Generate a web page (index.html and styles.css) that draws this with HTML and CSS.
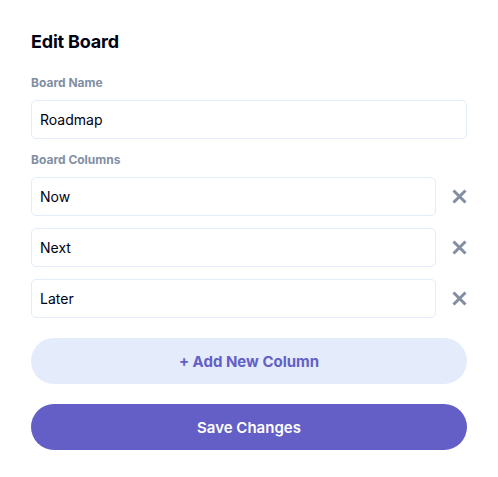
FILE: index.html
```html
<!DOCTYPE html>
<html>
<head>
<meta charset="utf-8">
<link rel="stylesheet" href="styles.css">
</head>
<body>
<div class="modal">
  <h1 class="title">Edit Board</h1>
  <div class="field">
    <div class="label">Board Name</div>
    <div class="input">Roadmap</div>
  </div>
  <div class="field">
    <div class="label">Board Columns</div>
    <div class="cols">
      <div class="col-row"><div class="input">Now</div><span class="x"><svg width="15" height="15" viewBox="0 0 15 15"><g stroke="#828FA3" stroke-width="3"><path d="M1.5 1.5l12 12M13.5 1.5l-12 12"/></g></svg></span></div>
      <div class="col-row"><div class="input">Next</div><span class="x"><svg width="15" height="15" viewBox="0 0 15 15"><g stroke="#828FA3" stroke-width="3"><path d="M1.5 1.5l12 12M13.5 1.5l-12 12"/></g></svg></span></div>
      <div class="col-row"><div class="input">Later</div><span class="x"><svg width="15" height="15" viewBox="0 0 15 15"><g stroke="#828FA3" stroke-width="3"><path d="M1.5 1.5l12 12M13.5 1.5l-12 12"/></g></svg></span></div>
    </div>
  </div>
  <div class="btn btn-secondary">+ Add New Column</div>
  <div class="btn btn-primary">Save Changes</div>
</div>
</body>
</html>
```
FILE: styles.css
```css
* { box-sizing: border-box; }
html, body { margin: 0; background: #fff; }
body { font-family: Inter, "Open Sans", sans-serif; }
.modal { padding: 30px 31px 20px 31px; display: flex; flex-direction: column; }
.title { margin: 0; font-size: 18px; font-weight: 700; line-height: 23px; color: #000112; letter-spacing: -0.2px; }
.field { display: flex; flex-direction: column; }
.label { font-size: 12px; font-weight: 700; color: #828FA3; line-height: 15px; margin-top: 22px; margin-bottom: 10px; }
.field + .field .label { margin-top: 13px; }
.input { height: 39px; border: 1px solid #E4EBFA; border-radius: 5px; padding: 0 8px; display: flex; align-items: center; font-size: 14px; font-weight: 400; color: #000112; }
.cols { display: flex; flex-direction: column; gap: 12px; }
.col-row { display: flex; align-items: center; }
.col-row .input { flex: 1; }
.x { width: 31px; display: flex; justify-content: flex-end; }
.btn { height: 46px; border-radius: 23px; display: flex; align-items: center; justify-content: center; font-size: 15px; font-weight: 700; }
.btn-secondary { margin-top: 20px; background: #E4EBFA; color: #635FC7; }
.btn-primary { margin-top: 20px; background: #635FC7; color: #fff; font-weight: 600; }
```
